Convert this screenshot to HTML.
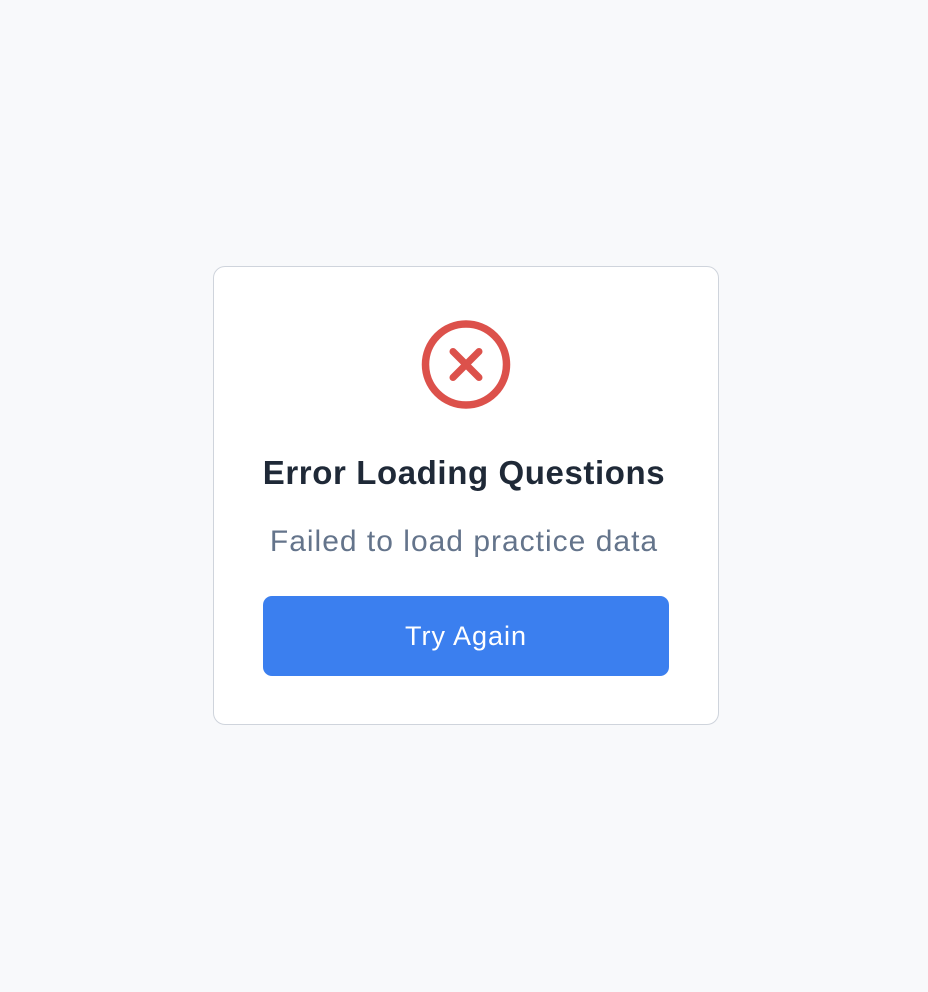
<!DOCTYPE html>
<html><head><style>
html,body{margin:0;padding:0;width:928px;height:992px;background:#f8f9fb;font-family:"Liberation Sans",sans-serif;}
.card{position:absolute;left:213px;top:266px;width:504px;height:457px;background:#fff;border:1.5px solid #cfd4dc;border-radius:12px;box-sizing:content-box;}
svg{position:absolute;left:420px;top:319px;}
.t{position:absolute;left:0;width:928px;text-align:center;top:454px;font-size:33px;letter-spacing:0.6px;font-weight:bold;color:#1f2937;}
.s{position:absolute;left:0;width:928px;text-align:center;top:525px;font-size:30px;letter-spacing:1px;color:#64748b;}
.b{position:absolute;left:263px;top:596px;width:406px;height:80px;background:#3b7fef;border-radius:9px;color:#fff;font-size:27px;letter-spacing:1px;line-height:80px;text-align:center;}
</style></head><body>
<div class="card"></div>
<svg width="92" height="92" viewBox="0 0 92 92"><circle cx="46" cy="45.5" r="40.5" fill="none" stroke="#dc514b" stroke-width="7.5"/><path d="M33 32.5L59 58.5M59 32.5L33 58.5" stroke="#dc514b" stroke-width="7" stroke-linecap="round"/></svg>
<div class="t">Error Loading Questions</div>
<div class="s">Failed to load practice data</div>
<div class="b">Try Again</div>
</body></html>
